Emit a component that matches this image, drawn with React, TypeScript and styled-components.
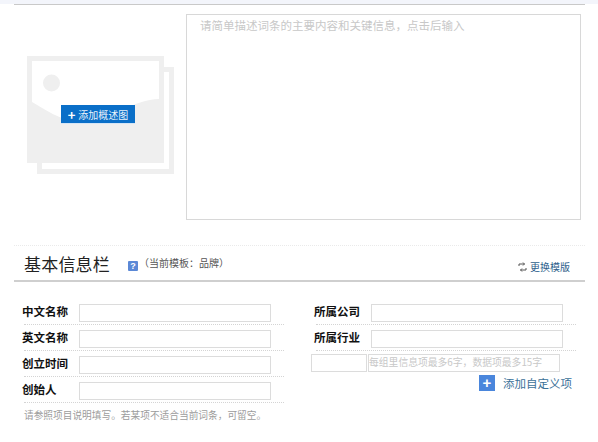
import React from "react";
import styled, { createGlobalStyle } from "styled-components";

const Global = createGlobalStyle`
  html, body { margin: 0; padding: 0; background: #fff; }
  body { font-family: "Liberation Sans", "Noto Sans CJK SC", sans-serif; font-size: 12px; color: #333; }
`;

const Page = styled.div`
  width: 598px;
  height: 442px;
  overflow: hidden;
  position: relative;
`;
const TopBand = styled.div`
  height: 4px;
  background: #f3f5fb;
`;
const TopRule = styled.div`
  height: 1px;
  margin-left: 14px;
  width: 571px;
  background: #c9c9c9;
`;
const Summary = styled.section`
  display: flex;
  align-items: flex-start;
  padding: 9px 0 0 27px;
  height: 240px;
  box-sizing: border-box;
`;
const Figure = styled.div`
  position: relative;
  width: 147px;
  height: 118px;
  margin-top: 42px;
  margin-right: 12px;
  flex: none;
`;
const AddPicture = styled.button`
  position: absolute;
  left: 34px;
  top: 49px;
  width: 74px;
  height: 19px;
  padding: 0;
  border: 1px solid #d5e5f5;
  border-width: 0 0 1px;
  background: #0a6fc8;
  color: #e8f2fb;
  font: 10px "Noto Sans CJK SC", sans-serif;
  display: flex;
  align-items: center;
  justify-content: center;
  gap: 3px;
`;
const Plus = styled.b`
  color: #fff;
  font-size: 13px;
  line-height: 1;
`;
const Describe = styled.div`
  width: 395px;
  height: 206px;
  box-sizing: border-box;
  border: 1px solid #d8d8d8;
  padding: 2px 13px;
  color: #c8c8c8;
  font: 11.500px/17px "Noto Sans CJK SC", sans-serif;
`;
const Head = styled.header`
  margin-left: 14px;
  width: 571px;
  height: 37px;
  box-sizing: border-box;
  border-top: 1px dotted #eaeaea;
  border-bottom: 2px solid #cfcfcf;
  display: flex;
  align-items: center;
  padding: 0 15px 0 10px;
`;
const Title = styled.h2`
  margin: 0 19px 0 0;
  font: 400 17px/1 "Noto Sans CJK SC", serif;
  letter-spacing: 0.200px;
  color: #222;
`;
const Help = styled.span`
  width: 10px;
  height: 10px;
  background: #5b88d6;
  color: #fff;
  font: 700 9px/10px "Liberation Sans", sans-serif;
  text-align: center;
  border-radius: 1px;
  margin: 5px 1px 0 -1px;
`;
const TemplateNote = styled.span`
  font: 10px "Noto Sans CJK SC", sans-serif;
  color: #555;
  margin-top: -1px;
`;
const Swap = styled.a`
  margin-left: auto;
  display: flex;
  align-items: center;
  gap: 3px;
  color: #2f5f8c;
  font: 10px "Noto Sans CJK SC", sans-serif;
  margin-top: 7px;
`;
const Form = styled.div`
  display: grid;
  grid-template-columns: 292px 1fr;
  padding: 17px 0 0 22px;
`;
const Column = styled.div`
  display: flex;
  flex-direction: column;
`;
const Row = styled.div`
  display: flex;
  align-items: flex-end;
  height: 26px;
  box-sizing: border-box;
  padding-bottom: 2px;
  margin-left: 2px;
  width: 260px;
  border-bottom: 1px dotted #d4d4d4;
`;
const Label = styled.label`
  width: 57px;
  margin: 0 0 3px -2px;
  flex: none;
  font: 700 11.500px "Noto Sans CJK SC", sans-serif;
  color: #111;
`;
const Field = styled.div`
  width: 192px;
  height: 18px;
  box-sizing: border-box;
  border: 1px solid #dcdcdc;
`;
const Note = styled.p`
  margin: 5px 0 0 2px;
  color: #9c9c9c;
  font: 9.700px "Noto Sans CJK SC", sans-serif;
`;
const CustomRow = styled.div`
  display: flex;
  gap: 1px;
  margin: 3px 0 0 -3px;
`;
const NameField = styled(Field)`
  width: 56px;
`;
const ValueField = styled(Field)`
  overflow: hidden;
  white-space: nowrap;
  color: #c8c8c8;
  font: 9.800px/15px "Noto Sans CJK SC", sans-serif;
`;
const AddRow = styled.div`
  display: flex;
  align-items: center;
  justify-content: flex-end;
  gap: 8px;
  width: 258px;
  margin-top: 3px;
  color: #3b7199;
  font: 11.500px "Noto Sans CJK SC", sans-serif;
`;
const AddIcon = styled.span`
  width: 16px;
  height: 16px;
  background: #4a86dc;
  color: #fff;
  font: 700 15px/16px "Liberation Sans", sans-serif;
  text-align: center;
`;

const Placeholder = () => (
  <svg width="147" height="118" viewBox="0 0 147 118">
    <path d="M10 11H147V118H10Z" fill="#efefef" />
    <path d="M15 16H142V113H15Z" fill="#fff" />
    <path d="M0 0H137V107H0Z" fill="#efefef" />
    <path d="M5 5H132V43C120 43 108 48 90 56L60 64H40C28 60 15 52 5 46Z" fill="#fff" />
    <circle cx="24.500" cy="27" r="8.500" fill="#efefef" />
  </svg>
);

const SwapIcon = () => (
  <svg width="9" height="10" viewBox="0 0 9 10" fill="none" stroke="#555" strokeWidth="1">
    <path d="M1 4V2H6.500M5 0.500L6.500 2L5 3.500M8 6V8H2.500M4 6.500L2.500 8L4 9.500" />
  </svg>
);

const left = ["中文名称", "英文名称", "创立时间", "创始人"];
const right = ["所属公司", "所属行业"];

export default function App() {
  return (
    <Page>
      <Global />
      <TopBand />
      <TopRule />
      <Summary>
        <Figure>
          <Placeholder />
          <AddPicture><Plus>+</Plus>添加概述图</AddPicture>
        </Figure>
        <Describe>请简单描述词条的主要内容和关键信息，点击后输入</Describe>
      </Summary>
      <Head>
        <Title>基本信息栏</Title>
        <Help>?</Help>
        <TemplateNote>（当前模板：品牌）</TemplateNote>
        <Swap><SwapIcon />更换模版</Swap>
      </Head>
      <Form>
        <Column>
          {left.map((t) => (
            <Row key={t}><Label>{t}</Label><Field /></Row>
          ))}
          <Note>请参照项目说明填写。若某项不适合当前词条，可留空。</Note>
        </Column>
        <Column>
          {right.map((t) => (
            <Row key={t}><Label>{t}</Label><Field /></Row>
          ))}
          <CustomRow>
            <NameField />
            <ValueField>每组里信息项最多6字，数据项最多15字</ValueField>
          </CustomRow>
          <AddRow><AddIcon>+</AddIcon>添加自定义项</AddRow>
        </Column>
      </Form>
    </Page>
  );
}
